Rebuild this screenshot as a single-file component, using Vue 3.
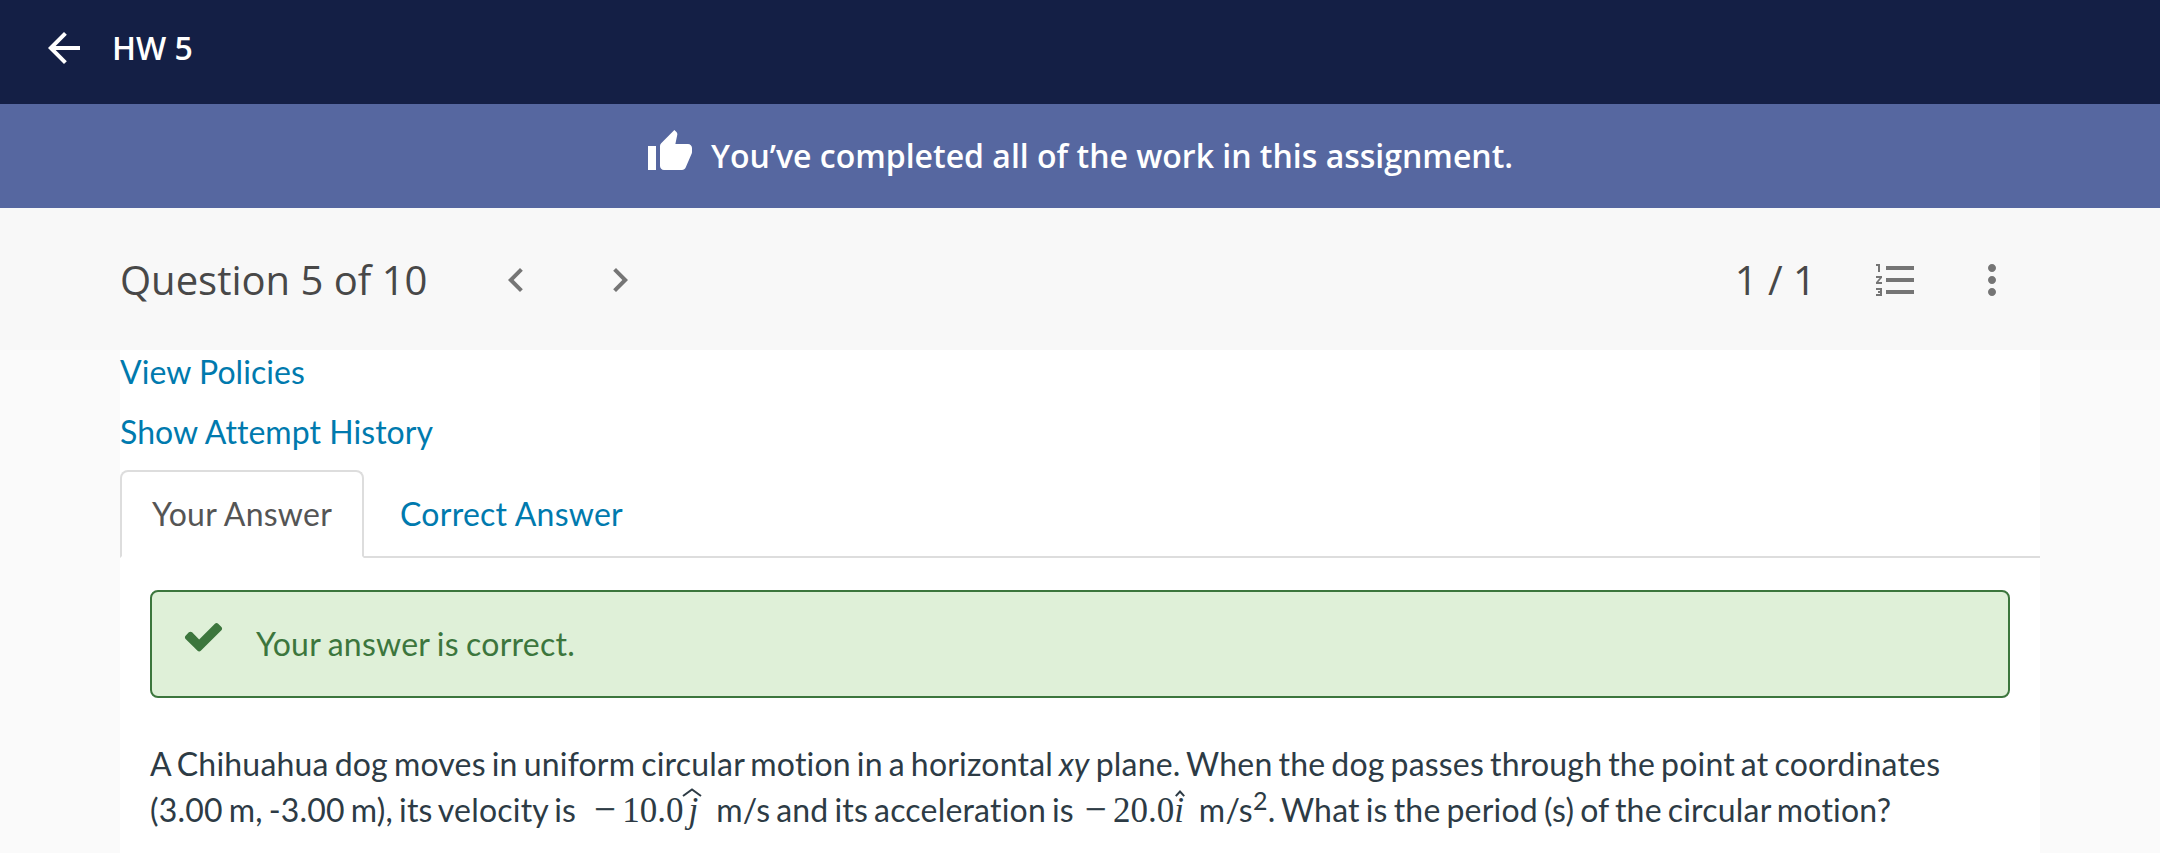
<script setup>
import { ref } from 'vue'

const title = 'HW 5'
const current = 5
const total = 10
const activeTab = ref('your')

const tabs = [
  { id: 'your', label: 'Your Answer' },
  { id: 'correct', label: 'Correct Answer' },
]
</script>

<template>
  <div class="page">
    <header class="top-bar">
      <svg class="icon" viewBox="0 0 24 24">
        <path d="M20 11H7.83l5.59-5.59L12 4l-8 8 8 8 1.41-1.41L7.83 13H20v-2z" />
      </svg>
      <span class="top-title">{{ title }}</span>
    </header>

    <div class="banner">
      <svg class="icon thumb" viewBox="0 0 24 24">
        <path d="M1 21h4V9H1v12zm22-11c0-1.1-.9-2-2-2h-6.31l.95-4.57.03-.32c0-.41-.17-.79-.44-1.06L14.17 1 7.59 7.59C7.22 7.95 7 8.45 7 9v10c0 1.1.9 2 2 2h9c.83 0 1.54-.5 1.84-1.22l3.02-7.05c.09-.23.14-.47.14-.73v-2z" />
      </svg>
      <span class="banner-text">You’ve completed all of the work in this assignment.</span>
    </div>

    <div class="question-bar">
      <h1 class="question-title">Question {{ current }} of {{ total }}</h1>
      <svg class="icon prev" viewBox="0 0 24 24">
        <path d="M15.41 7.41L14 6l-6 6 6 6 1.41-1.41L10.83 12z" />
      </svg>
      <svg class="icon next" viewBox="0 0 24 24">
        <path d="M10 6L8.59 7.41 13.17 12l-4.58 4.59L10 18l6-6z" />
      </svg>
      <span class="score">1 / 1</span>
      <svg class="icon list" viewBox="0 0 24 24">
        <path d="M2 17h2v.5H3v1h1v.5H2v1h3v-4H2v1zm1-9h1V4H2v1h1v3zm-1 3h1.8L2 13.1v.9h3v-1H3.2L5 10.9V10H2v1zm5-6v2h14V5H7zm0 14h14v-2H7v2zm0-6h14v-2H7v2z" />
      </svg>
      <svg class="icon more" viewBox="0 0 24 24">
        <path d="M12 8c1.1 0 2-.9 2-2s-.9-2-2-2-2 .9-2 2 .9 2 2 2zm0 2c-1.1 0-2 .9-2 2s.9 2 2 2 2-.9 2-2-.9-2-2-2zm0 6c-1.1 0-2 .9-2 2s.9 2 2 2 2-.9 2-2-.9-2-2-2z" />
      </svg>
    </div>

    <main class="content">
      <a class="link">View Policies</a>
      <a class="link">Show Attempt History</a>

      <nav class="tabs">
        <a
          v-for="tab in tabs"
          :key="tab.id"
          class="tab"
          :class="{ active: activeTab === tab.id }"
          @click="activeTab = tab.id"
        >{{ tab.label }}</a>
      </nav>

      <section class="panel">
        <div class="alert">
          <svg class="check" viewBox="0 0 1792 1792">
            <path d="M1671 566q0 40-28 68l-724 724-136 136q-28 28-68 28t-68-28l-136-136-362-362q-28-28-28-68t28-68l136-136q28-28 68-28t68 28l294 295 656-657q28-28 68-28t68 28l136 136q28 28 28 68z" />
          </svg>
          <span>Your answer is correct.</span>
        </div>

        <div class="problem">
          <div class="line">
            A Chihuahua dog moves in uniform circular motion in a horizontal <em>xy</em> plane. When the dog passes through the point at coordinates
          </div>
          <div class="line">
            (3.00 m, -3.00 m), its velocity is
            <span class="math velocity">
              <span class="minus">−</span><span class="num">10.0</span><span class="unit unit-j">j<svg class="hat hat-j" viewBox="0 0 20 9"><path d="M1 8L10 1.5 19 8" /></svg></span>
            </span>
            m/s and its acceleration is
            <span class="math accel">
              <span class="minus">−</span><span class="num">20.0</span><span class="unit unit-i">i<svg class="hat hat-i" viewBox="0 0 10 7"><path d="M0.8 6.2L5 1.5 9.2 6.2" /></svg></span>
            </span>
            m/s<sup>2</sup>. What is the period (s) of the circular motion?
          </div>
        </div>
      </section>
    </main>
  </div>
</template>

<style>
body {
  background: #fafafa;
}
</style>

<style scoped>
.page {
  height: 853px;
  overflow: hidden;
  display: flex;
  flex-direction: column;
  background: #fafafa;
  font-family: 'Open Sans', 'Liberation Sans', sans-serif;
}

.icon {
  width: 48px;
  height: 48px;
  flex: none;
  fill: currentColor;
}

.top-bar {
  height: 104px;
  flex: none;
  box-sizing: border-box;
  padding: 0 40px 8px;
  display: flex;
  align-items: center;
  gap: 24px;
  background: #141f45;
  color: #fff;
}

.top-title {
  padding-bottom: 2px;
  font-size: 32px;
  font-weight: 600;
}

.banner {
  height: 104px;
  flex: none;
  box-sizing: border-box;
  padding-right: 1px;
  display: flex;
  align-items: center;
  justify-content: center;
  gap: 17px;
  background: #5667a0;
  color: #fff;
}

.thumb {
  margin-bottom: 8px;
}

.banner-text {
  padding-bottom: 2px;
  font-size: 32px;
  font-weight: 600;
}

.question-bar {
  height: 142px;
  flex: none;
  box-sizing: border-box;
  padding: 2px 144px 0 120px;
  display: flex;
  align-items: center;
  background: #f8f8f8;
  color: #757575;
}

.question-title,
.score {
  margin: 0;
  padding-bottom: 2px;
  font-size: 40px;
  font-weight: 400;
  color: #484848;
  white-space: nowrap;
}

.question-title {
  width: 372px;
}

.next {
  margin-left: 56px;
}

.score {
  margin-left: auto;
}

.list {
  margin-left: 56px;
}

.more {
  margin-left: 48px;
}

.content {
  flex: 1;
  width: 1920px;
  margin: 0 auto;
  display: flex;
  flex-direction: column;
  background: #fff;
  font-family: Lato, 'Liberation Sans', sans-serif;
  font-size: 32px;
  font-variant-ligatures: none;
  line-height: 46px;
  color: #2d3b45;
}

.link {
  height: 60px;
  flex: none;
  line-height: 44px;
  letter-spacing: 0.05px;
  color: #007aae;
}

.tabs {
  height: 88px;
  flex: none;
  box-sizing: border-box;
  display: flex;
  gap: 4px;
  border-bottom: 2px solid #ddd;
  letter-spacing: 0.25px;
}

.tab {
  height: 88px;
  box-sizing: border-box;
  padding: 19px 30px 0;
  border: 2px solid transparent;
  border-radius: 8px 8px 0 0;
  color: #007aae;
}

.tab.active {
  background: #fff;
  border-color: #ddd;
  border-bottom-color: #fff;
  color: #555;
}

.panel {
  padding: 32px 30px 0;
}

.alert {
  height: 108px;
  box-sizing: border-box;
  padding: 23px 30px 0;
  display: flex;
  align-items: flex-start;
  gap: 31px;
  border: 2px solid #3c763d;
  border-radius: 8px;
  background: #dff0d8;
  color: #3c763d;
  letter-spacing: 0.25px;
  word-spacing: -1.2px;
}

.check {
  width: 43px;
  height: 43px;
  fill: currentColor;
}

.alert span {
  padding-top: 6px;
}

.problem {
  margin-top: 43px;
  letter-spacing: 0.2px;
  word-spacing: -2.4px;
}

.line {
  height: 46px;
  white-space: nowrap;
}

.math {
  display: inline-flex;
  align-items: baseline;
  font-family: 'Liberation Serif', serif;
  font-size: 35px;
  line-height: 40px;
  letter-spacing: 0;
}

.velocity {
  margin-left: 12px;
  width: 116px;
}

.accel {
  margin-left: 5px;
  width: 108px;
}

.minus {
  width: 28px;
  font-size: 38px;
  -webkit-text-stroke: 0.4px currentColor;
}

.unit {
  position: relative;
  font-style: italic;
}

.unit-j {
  margin-left: 5px;
}

.hat {
  position: absolute;
  fill: none;
  stroke: currentColor;
  stroke-width: 2;
}

.hat-j {
  width: 20px;
  height: 9px;
  left: -6px;
  top: -3px;
}

.hat-i {
  width: 10px;
  height: 7px;
  left: 1px;
  top: -1px;
}

sup {
  font-size: 25px;
  line-height: 0;
  position: relative;
  top: -12px;
  vertical-align: baseline;
}
</style>
